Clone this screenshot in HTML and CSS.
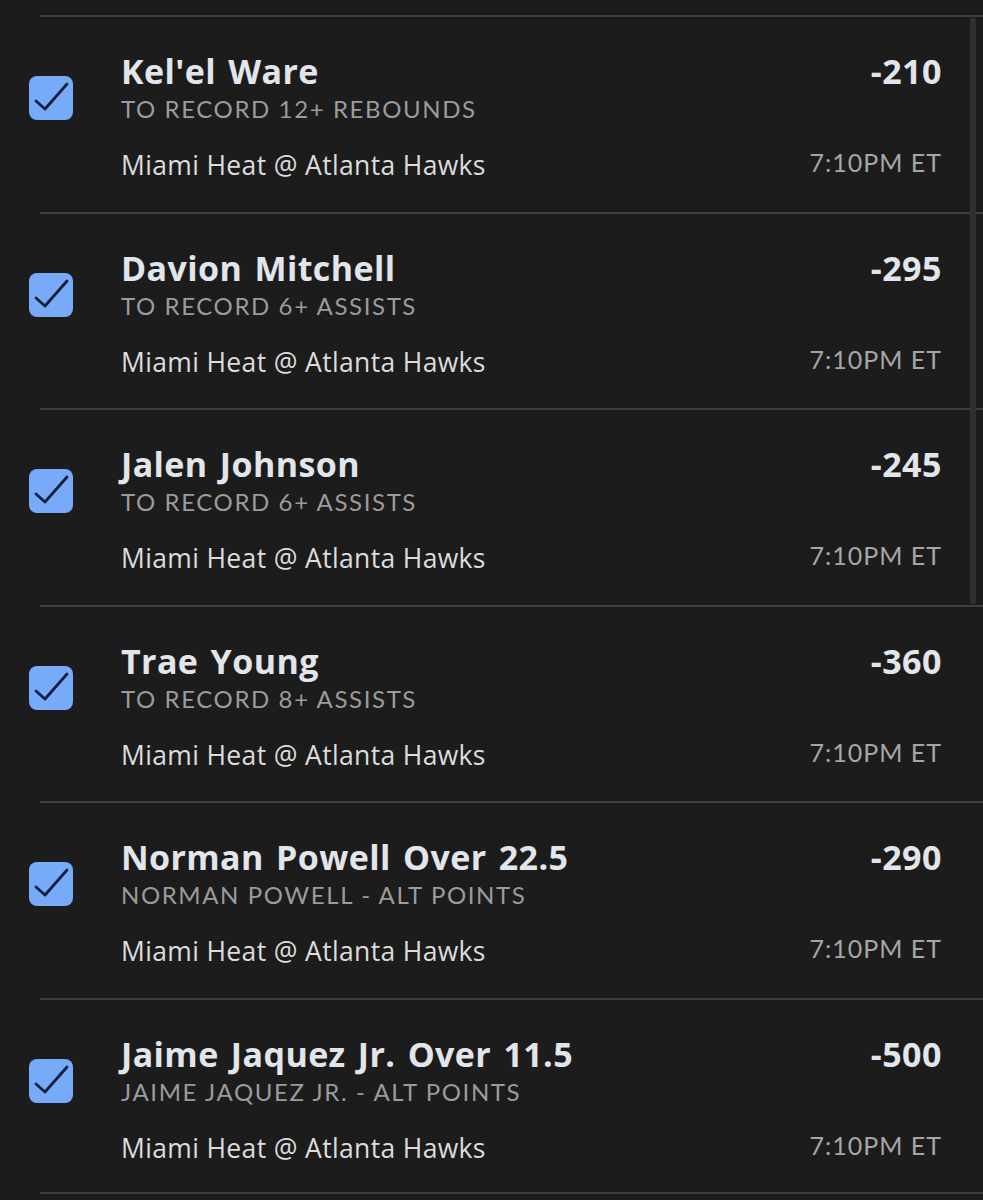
FILE: index.html
```html
<!DOCTYPE html>
<html>
<head>
  <meta charset="UTF-8">
  <title>Bet slip</title>
  <link rel="stylesheet" href="styles.css">
</head>
<body>
  <div class="slip">
    <div class="scrollbar"></div>

    <div class="bet">
      <div class="check"><svg viewBox="0 0 44 44"><path d="M7 25 L16 33 L38 8"/></svg></div>
      <div class="info">
        <div class="top"><span class="name">Kel'el Ware</span><span class="odds">-210</span></div>
        <div class="market">TO RECORD 12+ REBOUNDS</div>
        <div class="bottom"><span class="game">Miami Heat @ Atlanta Hawks</span><span class="time">7:10PM ET</span></div>
      </div>
    </div>

    <div class="bet">
      <div class="check"><svg viewBox="0 0 44 44"><path d="M7 25 L16 33 L38 8"/></svg></div>
      <div class="info">
        <div class="top"><span class="name">Davion Mitchell</span><span class="odds">-295</span></div>
        <div class="market">TO RECORD 6+ ASSISTS</div>
        <div class="bottom"><span class="game">Miami Heat @ Atlanta Hawks</span><span class="time">7:10PM ET</span></div>
      </div>
    </div>

    <div class="bet">
      <div class="check"><svg viewBox="0 0 44 44"><path d="M7 25 L16 33 L38 8"/></svg></div>
      <div class="info">
        <div class="top"><span class="name">Jalen Johnson</span><span class="odds">-245</span></div>
        <div class="market">TO RECORD 6+ ASSISTS</div>
        <div class="bottom"><span class="game">Miami Heat @ Atlanta Hawks</span><span class="time">7:10PM ET</span></div>
      </div>
    </div>

    <div class="bet">
      <div class="check"><svg viewBox="0 0 44 44"><path d="M7 25 L16 33 L38 8"/></svg></div>
      <div class="info">
        <div class="top"><span class="name">Trae Young</span><span class="odds">-360</span></div>
        <div class="market">TO RECORD 8+ ASSISTS</div>
        <div class="bottom"><span class="game">Miami Heat @ Atlanta Hawks</span><span class="time">7:10PM ET</span></div>
      </div>
    </div>

    <div class="bet">
      <div class="check"><svg viewBox="0 0 44 44"><path d="M7 25 L16 33 L38 8"/></svg></div>
      <div class="info">
        <div class="top"><span class="name">Norman Powell Over 22.5</span><span class="odds">-290</span></div>
        <div class="market">NORMAN POWELL - ALT POINTS</div>
        <div class="bottom"><span class="game">Miami Heat @ Atlanta Hawks</span><span class="time">7:10PM ET</span></div>
      </div>
    </div>

    <div class="bet">
      <div class="check"><svg viewBox="0 0 44 44"><path d="M7 25 L16 33 L38 8"/></svg></div>
      <div class="info">
        <div class="top"><span class="name">Jaime Jaquez Jr. Over 11.5</span><span class="odds">-500</span></div>
        <div class="market">JAIME JAQUEZ JR. - ALT POINTS</div>
        <div class="bottom"><span class="game">Miami Heat @ Atlanta Hawks</span><span class="time">7:10PM ET</span></div>
      </div>
    </div>
  </div>
</body>
</html>
```

FILE: styles.css
```css
* {
  margin: 0;
  padding: 0;
  box-sizing: border-box;
}
html, body {
  background: #1c1c1c;
}
body {
  font-family: Lato, "Open Sans", sans-serif;
  height: 1200px;
  overflow: hidden;
}
.slip {
  position: relative;
  padding: 15px 0 0 40px;
}
.scrollbar {
  position: absolute;
  top: 18px;
  right: 7px;
  width: 6px;
  height: 586px;
  background: #2f2f2f;
  border-radius: 2px;
}
.bet {
  display: flex;
  height: 196.5px;
  border-top: 2px solid #3f3f3f;
}
.bet:last-child {
  border-bottom: 2px solid #3f3f3f;
}
.check {
  flex: none;
  width: 44px;
  height: 44px;
  margin: 59px 0 0 -11px;
  background: #77aaf8;
  border-radius: 8px;
}
.check svg {
  display: block;
  width: 44px;
  height: 44px;
}
.check path {
  fill: none;
  stroke: #13203c;
  stroke-width: 2.8;
  stroke-linecap: round;
  stroke-linejoin: round;
}
.info {
  flex: 1;
  padding: 34px 41px 0 48px;
}
.top, .bottom {
  display: flex;
  justify-content: space-between;
}
.name {
  font-family: "Open Sans", Lato, sans-serif;
  font-size: 34px;
  line-height: 40px;
  font-weight: 700;
  letter-spacing: 0.4px;
  word-spacing: 3px;
  color: #e2e5ea;
}
.odds {
  font-family: "Open Sans", Lato, sans-serif;
  font-size: 34px;
  line-height: 40px;
  font-weight: 700;
  letter-spacing: 0.5px;
  color: #e2e5ea;
}
.market {
  font-size: 24px;
  line-height: 30px;
  letter-spacing: 1.6px;
  color: #9b9b9b;
  margin-top: 3px;
}
.bottom {
  margin-top: 25px;
}
.game {
  font-family: "Open Sans", Lato, sans-serif;
  font-size: 26.5px;
  line-height: 32px;
  letter-spacing: 0.35px;
  color: #dcdcdc;
}
.time {
  font-size: 25px;
  line-height: 27px;
  letter-spacing: 1px;
  color: #a6a6a6;
}
```
